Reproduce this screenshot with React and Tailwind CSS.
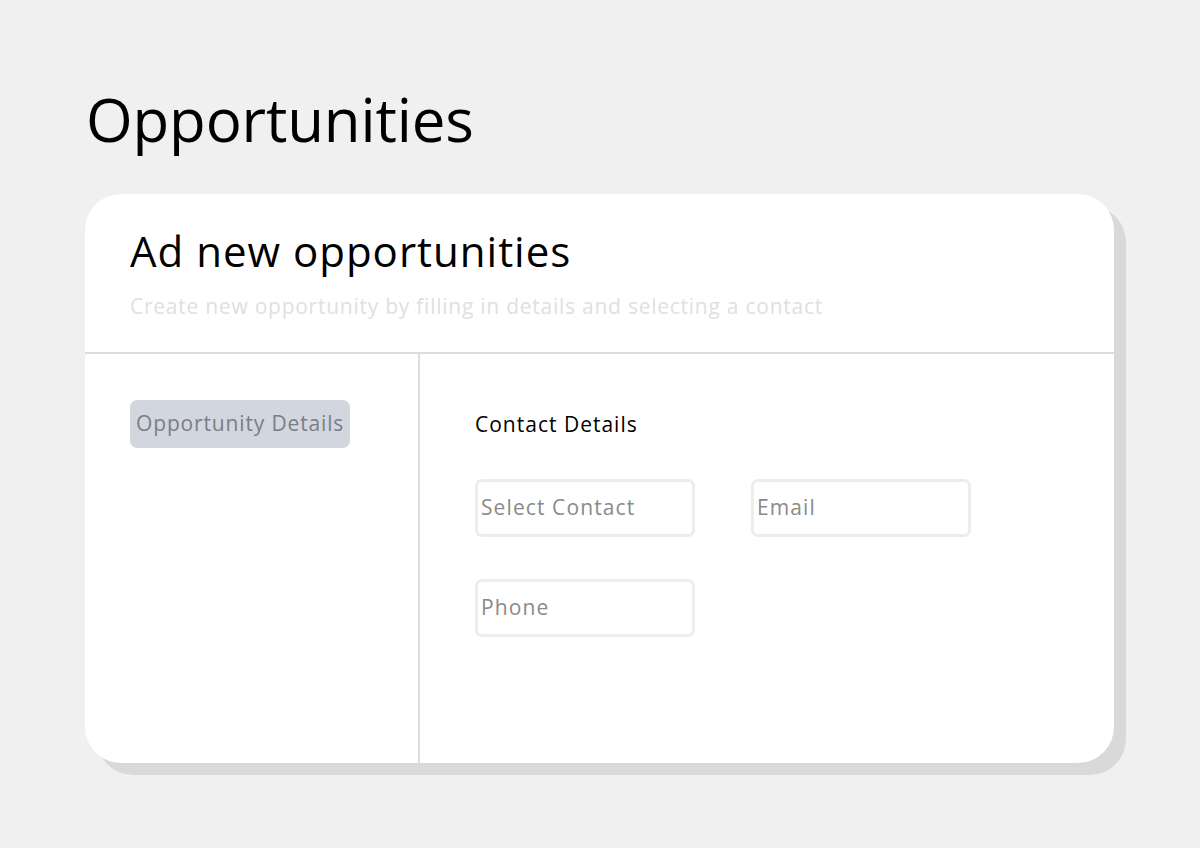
import React from "react";

const Field = ({ placeholder }) => (
  <div className="w-[220px] h-[58px] border-[3px] border-[#ededed] rounded-[7px] flex items-center px-[3px]">
    <span className="text-[21px] text-[#8a8a8a] tracking-[1.1px] whitespace-nowrap">{placeholder}</span>
  </div>
);

const App = () => {
  return (
    <div
      className="min-h-[848px] bg-[#f0f0f0] px-[85px] pt-[89px]"
      style={{ fontFamily: '"Open Sans", "Noto Sans", sans-serif' }}
    >
      <h1 className="text-[60px] leading-[60px] text-black pl-[1px] tracking-[-0.15px]">Opportunities</h1>

      {/* --- Card --- */}
      <div className="mt-[45px] w-[1029px] h-[569px] bg-white rounded-[36px] shadow-[12px_12px_0_#d9d9d9] flex flex-col overflow-hidden">
        <div className="h-[160px] border-b-2 border-[#dddddd] pt-[32px] px-[45px]">
          <h2 className="text-[42px] leading-[50px] text-black tracking-[1px]">Ad new opportunities</h2>
          <p className="mt-[16px] text-[21px] leading-[28px] text-[#e0e0e0] tracking-[0.75px]">
            Create new opportunity by filling in details and selecting a contact
          </p>
        </div>

        <div className="flex flex-1">
          {/* --- Sidebar --- */}
          <div className="w-[335px] border-r-2 border-[#dddddd] pt-[46px] pl-[45px]">
            <div className="w-[220px] h-[48px] bg-[#d2d6de] rounded-[7px] flex items-center pl-[6px]">
              <span className="text-[21px] text-[#7a7e86] tracking-[0.85px] whitespace-nowrap">Opportunity Details</span>
            </div>
          </div>

          {/* --- Contact Details --- */}
          <div className="flex-1 pt-[56px] pl-[55px]">
            <h3 className="text-[21px] leading-[28px] text-black tracking-[1px]">Contact Details</h3>
            <div className="mt-[41px] grid grid-cols-[220px_220px] gap-x-[56px] gap-y-[42px] w-max">
              <Field placeholder="Select Contact" />
              <Field placeholder="Email" />
              <Field placeholder="Phone" />
            </div>
          </div>
        </div>
      </div>
    </div>
  );
};

export default App;
